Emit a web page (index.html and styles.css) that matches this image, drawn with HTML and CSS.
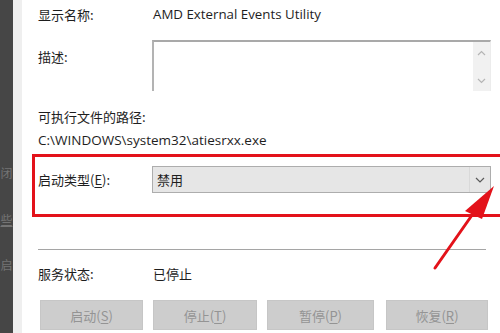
FILE: index.html
```html
<!doctype html>
<html lang="zh-CN">
<head>
  <meta charset="utf-8" />
  <link rel="stylesheet" href="styles.css">
</head>
<body>
  <div class="page">
    <div class="side-dark">
      <span class="ghost g1">闭</span>
      <span class="ghost g2 under">些</span>
      <span class="ghost g3">启</span>
    </div>
    <div class="side-gray"></div>

    <div class="panel">
      <div class="row row-name">
        <span class="label">显示名称:</span>
        <span class="value latin">AMD External Events Utility</span>
      </div>

      <div class="row row-desc">
        <span class="label">描述:</span>
        <div class="textbox">
          <div class="scroll">
            <svg width="9" height="6" viewBox="0 0 9 6"><path d="M1 5 L4.5 1.5 L8 5" fill="none" stroke="#b5b5b5" stroke-width="1.2"/></svg>
            <svg width="9" height="6" viewBox="0 0 9 6"><path d="M1 1 L4.5 4.5 L8 1" fill="none" stroke="#b5b5b5" stroke-width="1.2"/></svg>
          </div>
        </div>
      </div>

      <div class="path-label">可执行文件的路径:</div>
      <div class="path latin">C:\WINDOWS\system32\atiesrxx.exe</div>

      <div class="highlight">
        <div class="row row-start">
          <span class="label">启动类型(<u>E</u>):</span>
          <div class="select">
            <span>禁用</span>
            <span class="drop">
              <svg width="10" height="6" viewBox="0 0 10 6"><path d="M1 1 L5 5 L9 1" fill="none" stroke="#5a5a5a" stroke-width="1.2"/></svg>
            </span>
          </div>
        </div>
      </div>

      <div class="sep"></div>

      <div class="row row-status">
        <span class="label">服务状态:</span>
        <span class="value">已停止</span>
      </div>

      <div class="buttons">
        <div class="btn">启动(<u>S</u>)</div>
        <div class="btn">停止(<u>T</u>)</div>
        <div class="btn">暂停(<u>P</u>)</div>
        <div class="btn">恢复(<u>R</u>)</div>
      </div>
    </div>

    <!-- annotation arrow drawn over the dialog -->
    <svg class="arrow" width="500" height="333" viewBox="0 0 500 333">
      <line x1="435" y1="268" x2="477" y2="208" stroke="#e3121a" stroke-width="3" stroke-linecap="round"/>
      <polygon points="494,186 465,211 482,219" fill="#e3121a"/>
    </svg>
  </div>
</body>
</html>
```

FILE: styles.css
```css
:root {
  --text: #1e1e1e;
  --red: #e3121a;
  --muted: #949494;
}

html, body {
  margin: 0;
  padding: 0;
  background: #ffffff;
  overflow: hidden;
}

body {
  width: 500px;
  height: 333px;
  font-family: "Noto Sans CJK SC", "Noto Sans", sans-serif;
  font-size: 13px;
  color: var(--text);
}

.page {
  position: relative;
  display: flex;
  width: 500px;
  height: 333px;
  overflow: hidden;
}

.side-dark {
  width: 13px;
  flex-shrink: 0;
  background: #464646;
  display: flex;
  flex-direction: column;
  align-items: center;
}

.ghost {
  display: block;
  color: #747474;
  font-size: 12px;
  line-height: 20px;
  white-space: nowrap;
}

.g1 { margin-top: 163px; }
.g2 { margin-top: 27px; }
.g3 { margin-top: 25px; }

.under {
  text-decoration: underline;
}

.side-gray {
  width: 9px;
  flex-shrink: 0;
  background: #efefef;
}

.panel {
  width: 462px;
  flex-shrink: 0;
  padding-left: 16px;
  display: flex;
  flex-direction: column;
}

.latin {
  font-family: "Open Sans", "Noto Sans", sans-serif;
}

.row {
  display: grid;
  grid-template-columns: 114px 1fr;
  align-items: center;
}

.row-name {
  height: 28px;
}

.row-name .value {
  padding-left: 1px;
  font-size: 13.3px;
}

.row-desc {
  margin-top: 12px;
  align-items: start;
}

.row-desc .label {
  padding-top: 7px;
  line-height: 20px;
}

.textbox {
  width: 336px;
  height: 49px;
  border-top: 2px solid #a9a9a9;
  border-left: 2px solid #b3b3b3;
  border-right: 1px solid #ececec;
  display: flex;
  justify-content: flex-end;
}

.scroll {
  width: 17px;
  background: #f1f1f1;
  display: flex;
  flex-direction: column;
  justify-content: space-between;
  align-items: center;
  padding: 8px 0 7px;
}

.scroll svg {
  display: block;
}

.path-label {
  margin-top: 16px;
  line-height: 20px;
}

.path {
  margin-top: 3px;
  line-height: 20px;
  font-size: 13.5px;
}

/* red box runs off the right edge of the shot */
.highlight {
  box-sizing: border-box;
  align-self: flex-start;
  margin-top: 4px;
  margin-left: -6px;
  width: 480px;
  height: 63px;
  border-top: 3px solid var(--red);
  border-bottom: 3px solid var(--red);
  border-left: 3px solid var(--red);
  padding: 9px 0 0 3px;
}

.row-start {
  grid-template-columns: 114px 339px;
}

.select {
  height: 25px;
  border: 1px solid #adadad;
  background: #e6e6e6;
  display: flex;
  align-items: center;
  justify-content: space-between;
  padding-left: 4px;
}

.drop {
  width: 20px;
  height: 25px;
  border-left: 1px solid #d9d9d9;
  display: flex;
  align-items: center;
  justify-content: center;
}

.drop svg {
  display: block;
}

.sep {
  margin-top: 32px;
  width: 448px;
  height: 1px;
  background: #a5a5a5;
}

.row-status {
  margin-top: 14px;
  line-height: 20px;
}

.row-status .value {
  padding-left: 1px;
}

.buttons {
  margin-top: 16px;
  margin-left: 2px;
  display: grid;
  grid-template-columns: 103px 104px 107px 104px;
  column-gap: 10px;
}

.btn:last-child {
  margin-left: 2px;
}

.btn {
  height: 30px;
  background: #cdcdcd;
  border: 1px solid #c6c6c6;
  box-sizing: border-box;
  color: var(--muted);
  display: flex;
  align-items: center;
  justify-content: center;
}

.btn u, .label u {
  text-underline-offset: 2px;
}

.arrow {
  position: absolute;
  left: 0;
  top: 0;
  pointer-events: none;
}
```
